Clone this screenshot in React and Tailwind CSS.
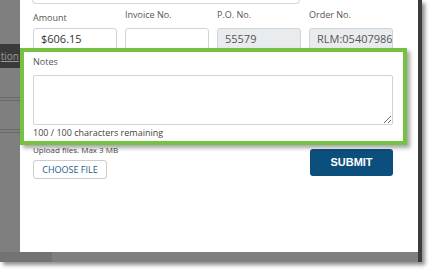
export default function App() {
  const font = { fontFamily: '"Open Sans", "Noto Sans", sans-serif' };
  return (
    <div className="w-[435px] h-[274px] bg-white overflow-hidden" style={font}>
      <div className="w-[422px] h-[262px] bg-[#7f7f7f] flex flex-col shadow-[3px_3px_4px_rgba(0,0,0,0.45)]">
        <div className="flex h-[252px]">
          {/* left sidebar */}
          <div className="w-[20px] shrink-0 flex flex-col">
            <div className="h-[44px]" />
            <div className="h-[24px] bg-[#3a3a3a] text-[#9a9a9a] text-[10px] leading-[24px] underline whitespace-nowrap flex justify-end pr-[1px]">
              tion
            </div>
            <div className="h-[29px]" />
            <div className="h-[1px] bg-[#6a6a6a]" />
            <div className="h-[2px]" />
            <div className="h-[1px] bg-[#6a6a6a]" />
            <div className="h-[28px]" />
            <div className="h-[1px] bg-[#6a6a6a]" />
            <div className="h-[2px]" />
            <div className="h-[1px] bg-[#6a6a6a]" />
          </div>
          {/* modal */}
          <div className="w-[398px] shrink-0 bg-white flex flex-col">
            <div className="ml-[12px] w-[268px] h-[4px] border border-t-0 border-[#d6d6d6] rounded-b-[4px]" />
            <div className="pl-[13px] grid grid-cols-[84px_84px_84px_84px] gap-x-[8px] mt-[6px]">
              {[
                ['Amount', '$606.15', false, 'pt-[3px]'],
                ['Invoice No.', '', false, ''],
                ['P.O. No.', '55579', true, ''],
                ['Order No.', 'RLM:05407986', true, ''],
              ].map(([label, val, dis, pt]) => (
                <div key={label} className="flex flex-col">
                  <div className={`h-[18px] text-[9px] leading-[10px] text-[#555] ${pt}`}>{label}</div>
                  <div
                    className={`h-[24px] border border-[#cfd4d9] rounded-[3px] px-[7px] text-[11px] leading-[20px] text-[#333] whitespace-nowrap overflow-hidden ${
                      dis ? 'bg-[#e9ecef] text-[#555]' : 'bg-white'
                    }`}
                  >
                    {val}
                  </div>
                </div>
              ))}
            </div>
            {/* highlighted notes */}
            <div className="relative z-10 -mt-[4px] w-[387px] h-[97px] border-[4px] border-[#77c142] bg-white shadow-[3px_3px_4px_rgba(0,0,0,0.35)] pl-[9px] pr-[10px] pt-[4px] flex flex-col">
              <div className="text-[9px] leading-[12px] text-[#555]">Notes</div>
              <textarea className="mt-[7px] w-[360px] h-[50px] border border-[#d0d4d8] rounded-[2px] bg-white resize-y" />
              <div className="mt-[2px] text-[9px] leading-[12px] text-[#444]">100 / 100 characters remaining</div>
            </div>
            <div className="flex justify-between pl-[13px] pr-[25px]">
              <div className="flex flex-col">
                <div className="text-[8px] leading-[10px] text-[#444]">Upload files. Max 3 MB</div>
                <div className="mt-[5px] w-[74px] h-[19px] border border-[#ccc] rounded-[3px] text-[9px] leading-[17px] text-[#1f5a8a] text-center">
                  CHOOSE FILE
                </div>
              </div>
              <div className="w-[83px] h-[27px] bg-[#0d4f7c] rounded-[3px] text-white font-bold text-[11px] leading-[27px] text-center mt-[4px]" style={{ fontFamily: '"Liberation Sans", Arial, sans-serif' }}>
                SUBMIT
              </div>
            </div>
          </div>
          {/* right border */}
          <div className="w-[4px] shrink-0 bg-[#3c3c3c]" />
        </div>
        <div className="h-[10px] flex">
          <div className="w-[52px] bg-[#737373]" />
          <div className="flex-1 bg-[#808080]" />
          <div className="w-[4px] bg-[#3c3c3c]" />
        </div>
      </div>
    </div>
  );
}
